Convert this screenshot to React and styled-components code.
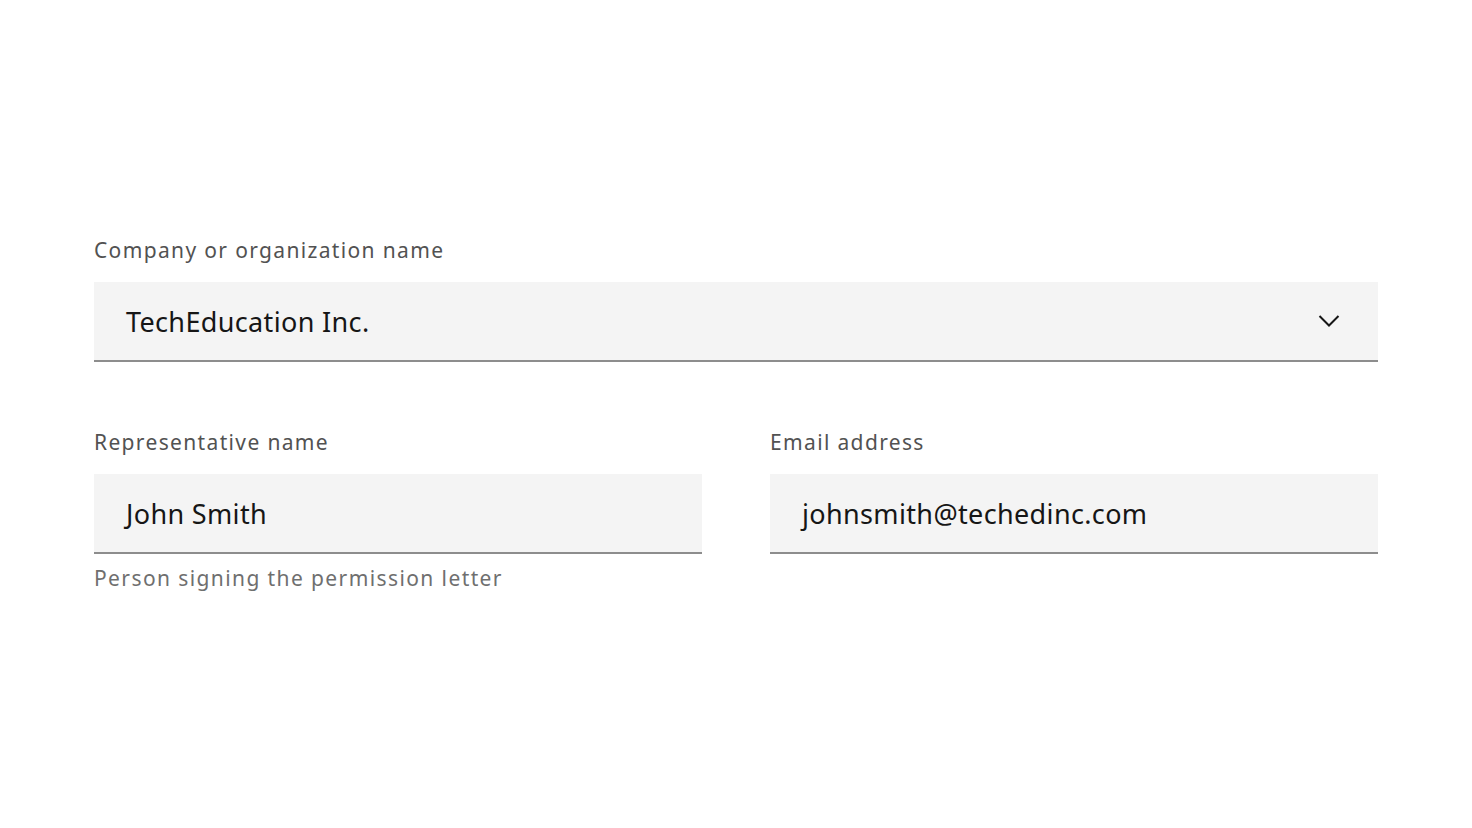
import React from "react";
import styled, { createGlobalStyle } from "styled-components";

const Global = createGlobalStyle`
  body {
    margin: 0;
    background: #ffffff;
    font-family: "Noto Sans", "Open Sans", sans-serif;
  }
`;

const Page = styled.div`
  padding: 236px 94px 0;
  display: flex;
  flex-direction: column;
  gap: 66px;
`;

const Row = styled.div`
  display: grid;
  grid-template-columns: ${(p) => (p.cols === 2 ? "1fr 1fr" : "1fr")};
  column-gap: 68px;
`;

const Field = styled.div`
  display: flex;
  flex-direction: column;
`;

const Label = styled.label`
  font-size: 21px;
  line-height: 28px;
  letter-spacing: 1.35px;
  color: #525252;
  margin-bottom: 18px;
`;

const Box = styled.div`
  height: 78px;
  background: #f4f4f4;
  border-bottom: 2px solid #8d8d8d;
  display: flex;
  align-items: center;
  justify-content: space-between;
  padding: 0 38px 0 32px;
`;

const Value = styled.span`
  font-size: 27px;
  color: #161616;
  letter-spacing: 0.35px;
`;

const Helper = styled.div`
  margin-top: 10px;
  font-size: 21px;
  line-height: 28px;
  letter-spacing: 1.4px;
  color: #6f6f6f;
`;

const Chevron = () => (
  <svg width="22" height="14" viewBox="0 0 22 14" fill="none">
    <path d="M1.5 2 L11 11.5 L20.5 2" stroke="#161616" strokeWidth="2" />
  </svg>
);

export default function App() {
  return (
    <>
      <Global />
      <Page>
        <Row>
          <Field>
            <Label>Company or organization name</Label>
            <Box>
              <Value>TechEducation Inc.</Value>
              <Chevron />
            </Box>
          </Field>
        </Row>
        <Row cols={2}>
          <Field>
            <Label>Representative name</Label>
            <Box>
              <Value>John Smith</Value>
            </Box>
            <Helper>Person signing the permission letter</Helper>
          </Field>
          <Field>
            <Label>Email address</Label>
            <Box>
              <Value>johnsmith@techedinc.com</Value>
            </Box>
          </Field>
        </Row>
      </Page>
    </>
  );
}
